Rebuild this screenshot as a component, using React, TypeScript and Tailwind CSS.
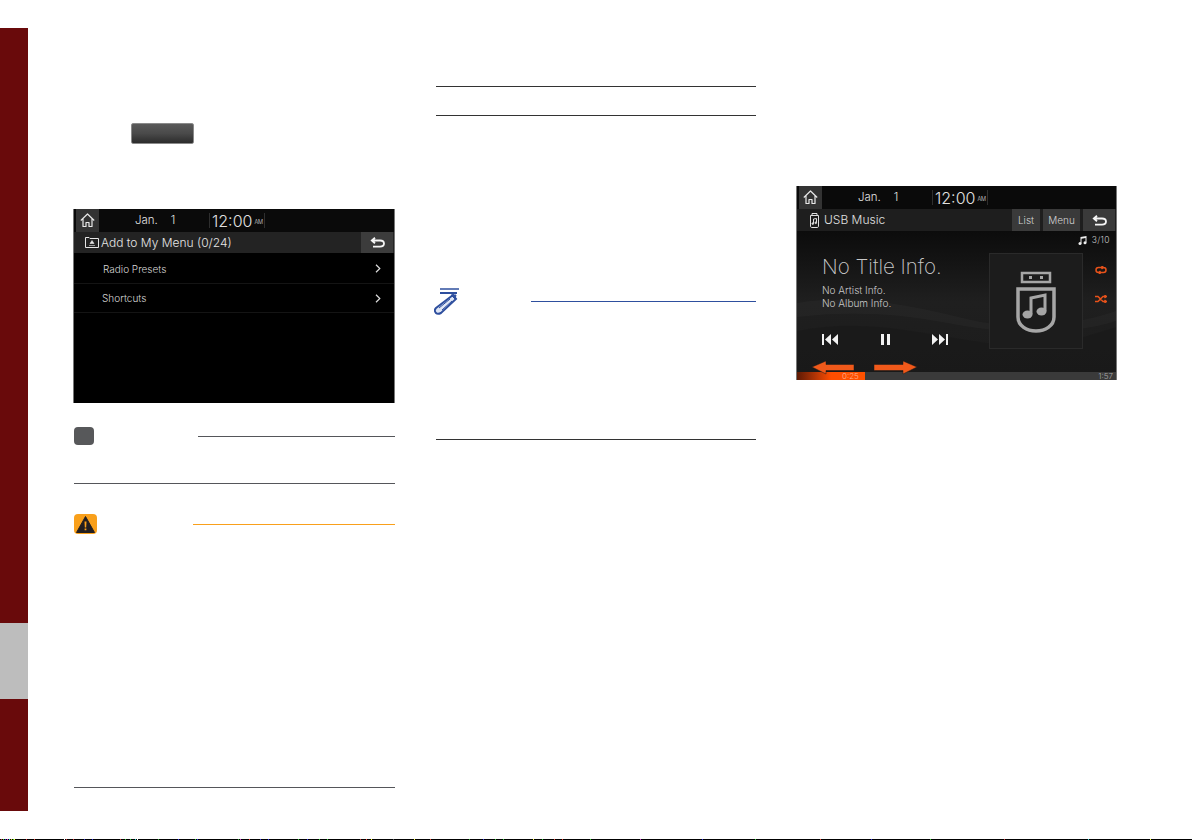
const screenFont = "[font-family:'Inter',sans-serif] font-light";

function HomeIcon() {
  return (
    <svg width="15" height="15" viewBox="0 0 15 15" fill="none" stroke="#e8e8e8" strokeWidth="1.2">
      <path d="M.8 7.5 7.5 1 14.2 7.5M3 5.8V13.5H6V9.5H9V13.5H12V5.8" strokeLinejoin="round" />
    </svg>
  );
}

function BackIcon() {
  return (
    <svg width="15" height="11" viewBox="0 0 15 11" fill="none" stroke="#f5f5f5" strokeWidth="1.8">
      <path d="M3 9.6H10C12.4 9.6 14 8.6 14 6.6S12.4 3.5 10 3.5H2M5 .7 1.8 3.5 5 6.3" />
    </svg>
  );
}

function StatusBar() {
  return (
    <div className="flex h-[23px] items-center bg-[#0a0a0a] pl-[2px] text-[#e0e0e0]">
      <div className="flex h-full w-[23px] items-center justify-center bg-[#333333]">
        <HomeIcon />
      </div>
      <span className="ml-[36px] w-[74px] text-[11.5px] leading-none">Jan.&nbsp;&nbsp;&nbsp;&nbsp;1</span>
      <div className="flex h-[15px] w-[56px] items-center border-x border-[#2e2e2e] pl-[2px]">
        <span className="text-[16px] leading-none">12:00</span>
        <span className="ml-[2px] mt-[4px] text-[5.5px] leading-none">AM</span>
      </div>
    </div>
  );
}

function Chevron() {
  return (
    <svg width="6" height="9" viewBox="0 0 6 9" fill="none" stroke="#dddddd" strokeWidth="1.2">
      <path d="M1 .8 4.8 4.5 1 8.2" />
    </svg>
  );
}

function AddMenuScreen() {
  return (
    <div className={`flex h-[194px] w-[322px] flex-col border-x border-[#777777] bg-black ${screenFont}`}>
      <StatusBar />
      <div className="flex h-[21px] items-center bg-[#232323] pl-[11px] pr-[1px] text-[#e6e6e6]">
        <svg width="14" height="11" viewBox="0 0 14 11" fill="none" stroke="#e6e6e6">
          <path d="M.5 10.5V.5H4L5 1.5H13.5V10.5Z" />
          <path d="M4 8.5H10M7 3.5 5 6.5H9Z" fill="#e6e6e6" strokeWidth=".6" />
        </svg>
        <span className="ml-[2px] flex-1 text-[12px] leading-none">Add to My Menu (0/24)</span>
        <div className="flex h-full w-[32px] items-center justify-center bg-[#3c3c3c]">
          <BackIcon />
        </div>
      </div>
      <div className="flex h-[31px] items-center border-b border-[#141414] pl-[29px] pr-[13px] pt-[1px] text-[#d6d6d6]">
        <span className="flex-1 text-[10px] leading-none">Radio Presets</span>
        <Chevron />
      </div>
      <div className="flex h-[29px] items-center border-b border-[#141414] pl-[28px] pr-[13px] text-[#d6d6d6]">
        <span className="flex-1 text-[10px] leading-none">Shortcuts</span>
        <Chevron />
      </div>
    </div>
  );
}

function MusicScreen() {
  return (
    <div className={`relative flex h-[194px] w-[321px] flex-col overflow-hidden border-x border-[#777777] bg-black ${screenFont}`}>
      <StatusBar />
      <div className="flex h-[22px] items-center bg-[#1e1e1e] pl-[12px] pr-[1px] text-[#e0e0e0]">
        <svg width="11" height="15" viewBox="0 0 11 15" fill="none" stroke="#e0e0e0">
          <path d="M3 2.5V.5H8V2.5M1.5 2.5H9.5V13C9.5 14 9 14.5 8 14.5H3C2 14.5 1.5 14 1.5 13Z" />
          <path d="M4.5 10.5V6L7.5 5.5V9.5" />
          <circle cx="3.8" cy="10.6" r=".8" fill="#e0e0e0" />
          <circle cx="6.8" cy="9.8" r=".8" fill="#e0e0e0" />
        </svg>
        <span className="ml-[4px] flex-1 text-[12px] leading-none">USB Music</span>
        <div className="flex h-full w-[28px] items-center justify-center bg-[#3a3a3a] text-[10px] text-[#d4d4d4]">List</div>
        <div className="ml-[3px] flex h-full w-[37px] items-center justify-center bg-[#3a3a3a] text-[10px] text-[#d4d4d4]">Menu</div>
        <div className="ml-[3px] flex h-full w-[32px] items-center justify-center bg-[#3a3a3a]">
          <BackIcon />
        </div>
      </div>
      <div className="relative flex flex-1 bg-gradient-to-b from-[#0c0c0c] via-[#1f1f1f] to-[#1c1c1c]">
        <svg className="absolute inset-0" width="319" height="141" viewBox="0 0 319 141" fill="none">
          <path d="M0 72C60 62 120 76 170 88S270 96 319 80V90C270 106 200 102 150 92S50 80 0 86Z" fill="#ffffff" fillOpacity=".025" />
          <path d="M0 100C70 86 130 104 190 112S280 108 319 96V141H0Z" fill="#000000" fillOpacity=".1" />
        </svg>
        <div className="relative ml-[25px] flex w-[166px] flex-col text-[#c9c9c9]">
          <span className="mt-[23px] text-[20.5px] font-extralight leading-[26px]">No Title Info.</span>
          <span className="mt-[4px] text-[10px] leading-[13px]">No Artist Info.</span>
          <span className="text-[10px] leading-[13px]">No Album Info.</span>
          <div className="mt-[24px] flex w-[126px] items-center justify-between">
            <svg width="17" height="11" viewBox="0 0 17 11" fill="#f2f2f2">
              <path d="M0 0H2V11H0ZM9 0V11L3 5.5ZM16 0V11L10 5.5Z" />
            </svg>
            <svg width="9" height="11" viewBox="0 0 9 11" fill="#f2f2f2">
              <path d="M0 0H3V11H0ZM6 0H9V11H6Z" />
            </svg>
            <svg width="17" height="11" viewBox="0 0 17 11" fill="#f2f2f2">
              <path d="M15 0H17V11H15ZM8 0V11L14 5.5ZM1 0V11L7 5.5Z" />
            </svg>
          </div>
        </div>
        <div className="relative flex flex-1 flex-col items-end pr-[6px]">
          <div className="mt-[5px] flex items-center gap-[5px] text-[8.5px] leading-none tracking-[0.4px] text-[#c9c9c9]">
            <svg width="9" height="9" viewBox="0 0 9 9" fill="#eeeeee">
              <path d="M2.5 1 8.5 0V6.5H7.5V2L3.5 2.7V7.5H2.5Z" />
              <circle cx="2" cy="7.5" r="1.5" />
              <circle cx="7" cy="6.7" r="1.5" />
            </svg>
            3/10
          </div>
          <div className="mt-[8px] flex w-full pl-[1px]">
            <div className="flex h-[96px] w-[94px] flex-col items-center border border-[#2a2a2a] bg-[#1c1c1c] pt-[17px]">
              <svg width="40" height="62" viewBox="0 0 40 62" fill="none" stroke="#a6a6a6" strokeWidth="3.5">
                <path d="M6 2H34V11H6Z" strokeWidth="2.5" />
                <path d="M13 6.5H16M24 6.5H27" strokeWidth="3" />
                <path d="M2 18H38V46C38 55 29 60 20 60S2 55 2 46Z" />
                <path d="M15 43V27L29 24V40" strokeWidth="3" />
                <ellipse cx="11.5" cy="43.5" rx="5" ry="4" fill="#a6a6a6" stroke="none" />
                <ellipse cx="25.5" cy="40.5" rx="5" ry="4" fill="#a6a6a6" stroke="none" />
              </svg>
            </div>
            <div className="ml-[12px] flex flex-col items-center gap-[21px] pt-[13px]">
              <svg width="12" height="8" viewBox="0 0 12 8" fill="none" stroke="#e8521a" strokeWidth="1.5">
                <path d="M8 1.5H3.5C2 1.5 1 2.5 1 4S2 6.5 3.5 6.5H8.5C10 6.5 11 5.5 11 4S10 1.5 8.5 1.5M6.5 0 8.5 1.5 6.5 3M5.5 5 3.5 6.5 5.5 8" />
              </svg>
              <svg width="12" height="8" viewBox="0 0 12 8" fill="none" stroke="#e8521a" strokeWidth="1.4">
                <path d="M0 1.5H3L8 6.5H11M0 6.5H3L8 1.5H11M9.5 0 11.5 1.5 9.5 3M9.5 5 11.5 6.5 9.5 8" />
              </svg>
            </div>
          </div>
        </div>
      </div>
      <div className="flex h-[8px] bg-[#3a3a3a] text-[8px] leading-[8px]">
        <div className="w-[68px] bg-gradient-to-r from-[#5e1a04] via-[#ff4d00] to-[#ff5200] pl-[45px] text-[#ffb090]">0:25</div>
        <div className="flex-1 pr-[3px] text-right text-[#a8a8a8]">1:57</div>
      </div>
      <svg className="absolute left-[14px] top-[174px]" width="106" height="16" viewBox="0 0 106 16">
        <path d="M1 7 15 1V4.5H43V10.5H15V14Z" fill="#f0591a" stroke="#1a1a1a" strokeWidth=".5" />
        <path d="M63 4.5H92V1L106 7 92 14V10.5H63Z" fill="#f0591a" stroke="#1a1a1a" strokeWidth=".5" />
      </svg>
    </div>
  );
}

function Rule({ className }: { className: string }) {
  return <div className={`h-px ${className}`} />;
}

const noise: [number, string][] = [
  [1, "#c33"], [3, "#3c3"], [5, "#33c"], [7, "#c3c"], [9, "#3cc"], [11, "#cc3"], [13, "#3c3"], [14, "#ff3"],
  [26, "#d33"], [34, "#e43"], [64, "#fff"], [66, "#c33"], [73, "#d33"], [84, "#33c"], [92, "#33e"], [120, "#c33"],
  [125, "#3c3"], [130, "#3c3"], [135, "#3cc"], [137, "#fff"], [158, "#3a3"], [178, "#33e"], [195, "#3c3"], [197, "#33e"],
  [238, "#3a3"], [240, "#c3c"], [249, "#e43"], [260, "#33e"], [268, "#33e"], [298, "#3c3"], [307, "#33e"], [319, "#3c3"],
  [327, "#3c3"], [360, "#c33"], [366, "#e43"], [371, "#ff3"], [393, "#555"], [414, "#ff3"], [430, "#e43"], [469, "#3a3"],
  [483, "#33e"], [495, "#3c3"], [503, "#3c3"], [533, "#ff3"], [542, "#3c3"], [554, "#e43"], [562, "#e43"], [590, "#3c3"],
  [640, "#c3c"], [702, "#33e"], [755, "#3c3"], [820, "#e43"], [871, "#33e"], [930, "#3c3"], [1004, "#c33"], [1088, "#3cc"], [1150, "#ff3"],
];

export default function App() {
  return (
    <div className="relative flex h-[840px] w-[1192px] overflow-hidden bg-white">
      <aside className="flex w-[28px] shrink-0 flex-col pt-[28px]">
        <div className="h-[595px] bg-[#690a0b]" />
        <div className="h-[76px] bg-[#bdbdbd]" />
        <div className="h-[112px] bg-[#690a0b]" />
      </aside>

      <section className="ml-[45px] flex w-[322px] shrink-0 flex-col">
        <div className="ml-[58px] mt-[123px] h-[21px] w-[63px] rounded-[2px] border border-[#8a8a8a] bg-gradient-to-b from-[#5a5a5a] via-[#4a4a4a] to-[#2c2c2c]" />
        <div className="mt-[65px]">
          <AddMenuScreen />
        </div>
        <div className="mt-[24px] flex h-[18px] items-center pl-[1px]">
          <div className="h-[18px] w-[20px] rounded-[4px] bg-[#57585a]" />
          <Rule className="ml-[104px] flex-1 bg-[#55565a]" />
        </div>
        <Rule className="ml-[1px] mt-[38px] bg-[#55565a]" />
        <div className="mt-[30px] flex h-[20px] items-center pl-[1px]">
          <div className="flex h-[20px] w-[23px] items-center justify-center rounded-[4px] bg-[#f9a01b]">
            <svg width="19" height="17" viewBox="0 0 19 17">
              <path d="M9.5 .5 18.5 16.5H.5Z" fill="#231f20" strokeLinejoin="round" stroke="#231f20" />
              <path d="M8.5 5.5H10.5L10.2 11.5H8.8ZM8.6 12.5H10.4V14.3H8.6Z" fill="#f9a01b" />
            </svg>
          </div>
          <Rule className="ml-[96px] flex-1 bg-[#f9a01b]" />
        </div>
        <Rule className="ml-[1px] mt-[253px] bg-[#55565a]" />
      </section>

      <section className="ml-[41px] flex w-[320px] shrink-0 flex-col">
        <Rule className="mt-[86px] bg-[#333333]" />
        <Rule className="mt-[28px] bg-[#333333]" />
        <div className="mt-[172px] flex h-[27px] items-center">
          <svg className="-ml-[2px]" width="26" height="27" viewBox="0 0 26 27" fill="none" stroke="#2e4f9e">
            <path d="M6 1H25" strokeWidth="1.5" />
            <path d="M6 5H23" strokeWidth="2" />
            <path d="M19 7 2 20C0 22 1 24 2 25S5 26 7 25L22 11Z" fill="#dfe6f5" strokeWidth="2" />
            <path d="M5 20 16 11M8 22 18 13" strokeWidth="1" />
            <path d="M17 7H22L21 11Z" fill="#2e4f9e" strokeWidth="1" />
          </svg>
          <Rule className="ml-[71px] flex-1 bg-[#2e4f9e]" />
        </div>
        <Rule className="mt-[124px] bg-[#333333]" />
      </section>

      <section className="ml-[40px] w-[320px] shrink-0 pt-[186px]">
        <MusicScreen />
      </section>

      <svg className="absolute bottom-0 left-0" width="1192" height="1" viewBox="0 0 1192 1">
        <rect width="1192" height="1" fill="#000000" />
        {noise.map(([x, fill]) => (
          <rect key={x} x={x} width="1" height="1" fill={fill} />
        ))}
      </svg>
    </div>
  );
}
